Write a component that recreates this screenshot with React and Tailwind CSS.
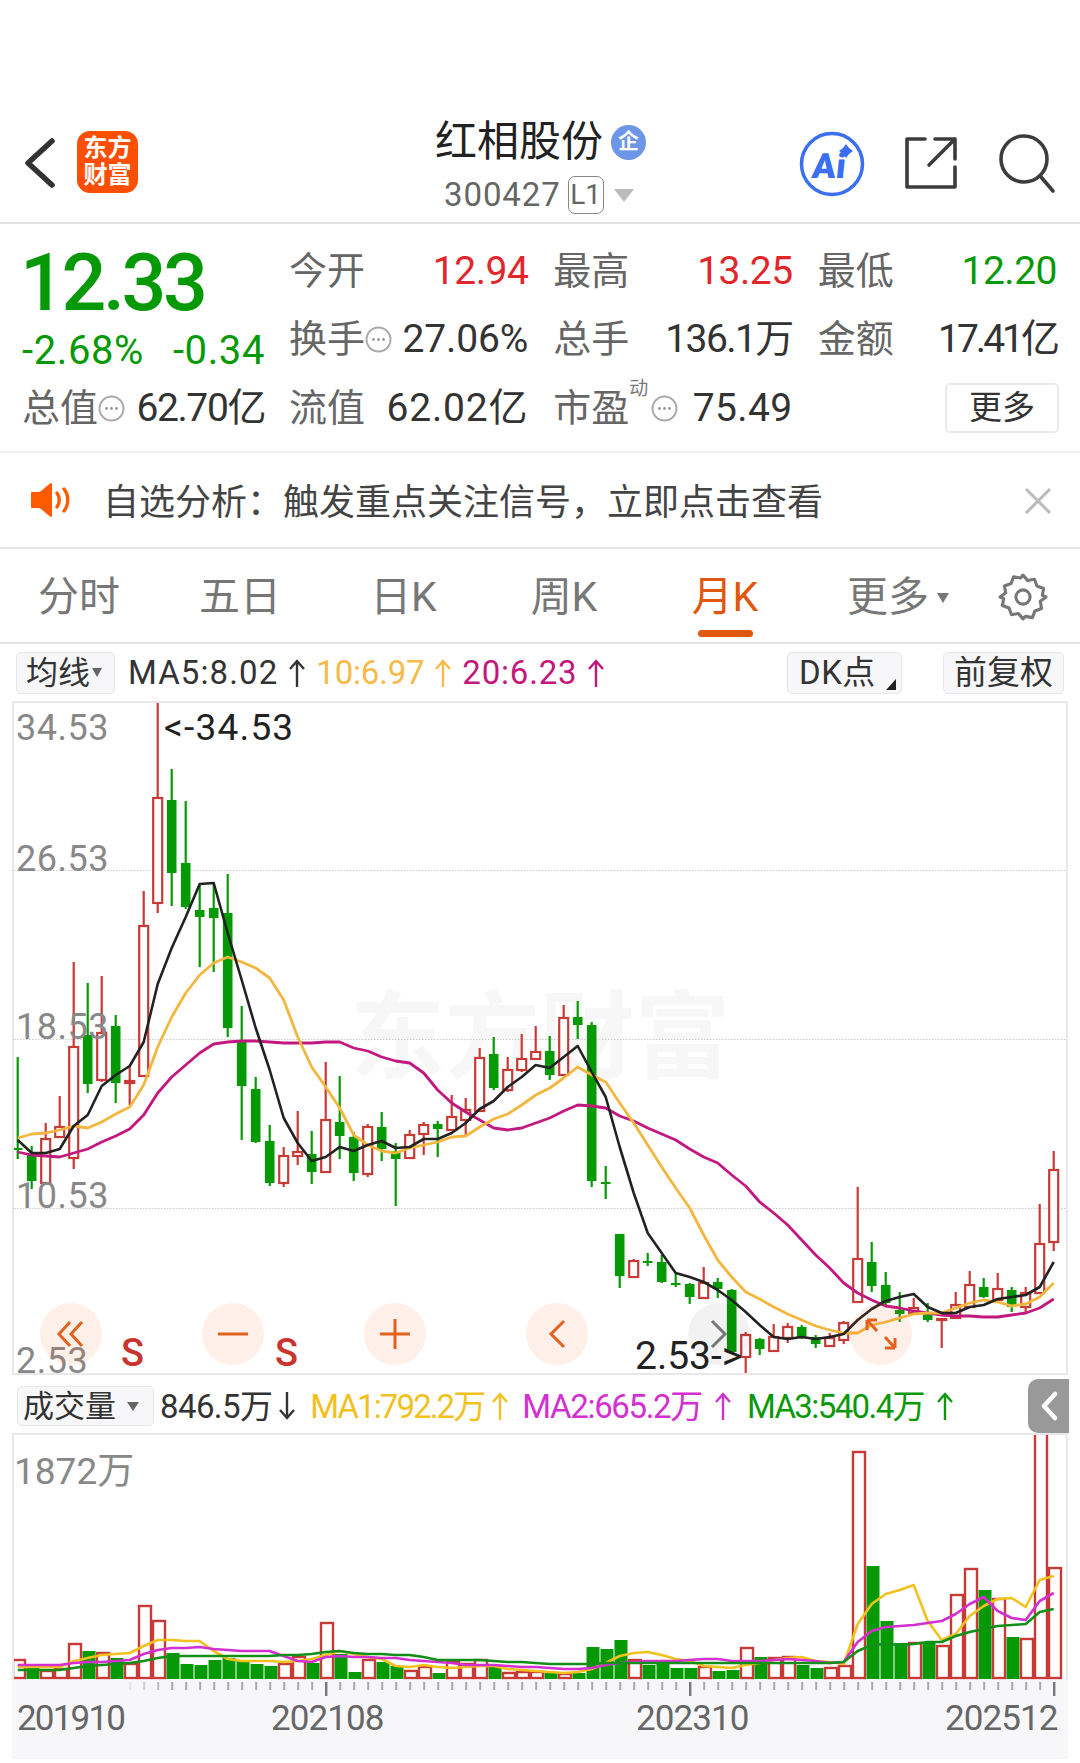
const red = "#c73a35"
const green = "#059a05"

// [hi, top, bottom, lo, colour] in page pixels, one per month
const candles = [
  [1057,1148,1150,1159,"g"],[1146,1155,1181,1189,"g"],[1123,1139,1183,1183,"r"],[1096,1127,1137,1138,"r"],[962,1047,1158,1169,"r"],
  [983,1035,1084,1093,"g"],[976,1033,1080,1082,"r"],[1015,1026,1083,1103,"g"],[1065,1081,1083,1105,"r"],[891,926,1076,1076,"r"],
  [702,798,903,913,"r"],[769,800,873,906,"g"],[801,863,907,909,"g"],[885,910,917,967,"g"],[882,908,918,972,"g"],
  [874,913,1028,1037,"g"],[1006,1042,1086,1140,"g"],[1077,1089,1142,1143,"g"],[1125,1141,1183,1186,"g"],[1147,1156,1183,1187,"r"],
  [1111,1152,1156,1165,"r"],[1131,1154,1172,1184,"g"],[1062,1120,1172,1173,"r"],[1076,1122,1136,1159,"g"],[1132,1137,1173,1181,"g"],
  [1124,1127,1174,1177,"r"],[1112,1127,1149,1161,"g"],[1143,1151,1159,1206,"g"],[1130,1135,1158,1159,"r"],[1122,1125,1134,1155,"r"],
  [1121,1124,1129,1157,"g"],[1095,1117,1130,1131,"r"],[1098,1110,1120,1135,"r"],[1048,1058,1111,1111,"r"],[1037,1054,1088,1090,"g"],
  [1057,1070,1090,1092,"r"],[1034,1059,1070,1072,"r"],[1026,1052,1059,1059,"r"],[1036,1051,1075,1080,"g"],[1005,1018,1075,1076,"r"],
  [1001,1017,1025,1039,"g"],[1022,1025,1181,1187,"g"],[1166,1182,1183,1199,"g"],[1234,1234,1276,1288,"g"],[1259,1261,1277,1278,"r"],
  [1253,1261,1263,1266,"g"],[1255,1262,1282,1283,"g"],[1272,1283,1284,1287,"g"],[1283,1284,1297,1304,"g"],[1267,1283,1298,1298,"r"],
  [1278,1282,1289,1298,"g"],[1289,1290,1352,1353,"g"],[1332,1335,1357,1375,"r"],[1338,1339,1349,1355,"g"],[1324,1337,1351,1351,"r"],
  [1323,1327,1338,1343,"r"],[1325,1327,1337,1339,"g"],[1335,1337,1344,1348,"g"],[1333,1338,1346,1347,"r"],[1321,1323,1340,1344,"r"],
  [1187,1259,1302,1302,"r"],[1242,1262,1286,1292,"g"],[1272,1285,1303,1305,"g"],[1292,1310,1314,1322,"g"],[1298,1308,1313,1315,"r"],
  [1303,1313,1320,1322,"g"],[1318,1319,1320,1348,"r"],[1292,1305,1318,1319,"r"],[1271,1285,1307,1308,"r"],[1278,1287,1297,1298,"g"],
  [1273,1289,1300,1301,"r"],[1287,1290,1307,1312,"g"],[1287,1293,1307,1312,"r"],[1204,1244,1293,1293,"r"],[1151,1170,1242,1251,"r"],
]

const ma5 = [1140,1153,1153,1149,1126,1115,1086,1075,1066,1042,984,948,917,884,883,933,980,1028,1070,1118,1143,1161,1157,1147,1151,1145,1141,1148,1147,1139,1139,1133,1123,1109,1101,1087,1077,1065,1068,1057,1046,1072,1097,1147,1193,1233,1253,1273,1277,1282,1290,1300,1312,1325,1337,1339,1337,1339,1337,1334,1320,1309,1301,1297,1294,1307,1313,1313,1307,1305,1299,1297,1295,1287,1262]
const ma10 = [1138,1134,1133,1130,1126,1128,1122,1114,1107,1085,1047,1017,993,975,963,957,962,968,978,1000,1037,1067,1087,1108,1135,1145,1151,1153,1148,1145,1142,1137,1136,1127,1119,1114,1105,1095,1088,1078,1067,1075,1082,1103,1123,1145,1167,1188,1208,1235,1260,1277,1292,1299,1307,1314,1320,1326,1330,1333,1333,1325,1322,1318,1314,1313,1313,1308,1303,1300,1302,1306,1304,1297,1283]
const ma20 = [1152,1155,1156,1157,1153,1149,1142,1136,1129,1115,1093,1077,1065,1053,1044,1042,1041,1041,1042,1043,1043,1043,1042,1042,1048,1051,1057,1061,1063,1073,1090,1103,1112,1120,1128,1130,1128,1123,1118,1111,1105,1106,1108,1116,1121,1128,1134,1140,1149,1157,1163,1175,1186,1202,1213,1225,1240,1255,1268,1283,1293,1300,1306,1308,1311,1313,1315,1316,1316,1317,1317,1315,1313,1308,1299]

// volume bar tops, baseline is 1680
const vols = [
  [1661,"r"],[1668,"g"],[1672,"r"],[1670,"r"],[1645,"r"],[1652,"g"],[1654,"r"],[1659,"g"],[1665,"r"],[1607,"r"],
  [1622,"r"],[1654,"g"],[1665,"g"],[1666,"g"],[1661,"g"],[1659,"g"],[1662,"g"],[1665,"g"],[1667,"g"],[1665,"r"],
  [1658,"r"],[1664,"g"],[1624,"r"],[1655,"g"],[1673,"g"],[1661,"r"],[1663,"g"],[1667,"g"],[1672,"r"],[1668,"r"],
  [1674,"g"],[1663,"r"],[1665,"r"],[1661,"r"],[1667,"g"],[1674,"r"],[1673,"r"],[1673,"r"],[1674,"g"],[1675,"r"],
  [1674,"g"],[1648,"g"],[1650,"g"],[1641,"g"],[1661,"r"],[1666,"g"],[1665,"g"],[1669,"g"],[1669,"g"],[1668,"r"],
  [1672,"g"],[1671,"g"],[1649,"r"],[1658,"g"],[1659,"r"],[1658,"r"],[1666,"g"],[1669,"g"],[1669,"r"],[1667,"r"],
  [1453,"r"],[1567,"g"],[1622,"g"],[1644,"g"],[1644,"r"],[1643,"g"],[1647,"r"],[1596,"r"],[1570,"r"],[1591,"g"],
  [1600,"r"],[1638,"g"],[1640,"r"],[1433,"r"],[1569,"r"],
]

const vma1 = [1668,1668,1668,1668,1662,1659,1656,1655,1654,1647,1641,1641,1642,1642,1652,1660,1662,1662,1662,1663,1662,1660,1656,1652,1655,1658,1660,1667,1668,1666,1668,1669,1668,1667,1667,1670,1671,1672,1673,1674,1673,1670,1664,1657,1654,1653,1656,1660,1662,1667,1668,1669,1666,1664,1661,1659,1658,1662,1663,1665,1625,1605,1595,1591,1586,1622,1641,1635,1617,1607,1600,1599,1608,1581,1577]
const vma2 = [1666,1666,1666,1666,1664,1663,1663,1662,1661,1655,1651,1649,1649,1648,1650,1651,1652,1652,1652,1657,1662,1663,1658,1657,1658,1658,1659,1659,1661,1662,1663,1664,1666,1666,1666,1667,1668,1668,1669,1670,1670,1669,1666,1664,1663,1662,1662,1662,1661,1660,1660,1662,1662,1662,1661,1660,1661,1662,1664,1663,1643,1632,1628,1627,1626,1624,1622,1615,1605,1598,1612,1619,1621,1602,1594]
const vma3 = [1671,1671,1671,1671,1669,1667,1666,1665,1664,1662,1659,1657,1657,1657,1657,1657,1657,1657,1657,1656,1656,1655,1653,1652,1654,1655,1655,1656,1656,1658,1661,1661,1661,1661,1662,1663,1663,1664,1665,1665,1665,1665,1664,1664,1664,1664,1664,1664,1664,1664,1664,1664,1664,1664,1664,1664,1664,1664,1664,1663,1652,1646,1645,1646,1645,1643,1643,1637,1633,1630,1627,1626,1625,1613,1610]

const xAt = (i) => 17.7 + 14 * i
const toPoints = (ys) => ys.map((y, i) => `${xAt(i)},${y}`).join(" ")

function HelpDot() {
  return (
    <svg width="27" height="27" viewBox="0 0 27 27" className="shrink-0">
      <circle cx="13.5" cy="13.5" r="12" fill="none" stroke="#aaa" strokeWidth="2" />
      <circle cx="8.5" cy="13.5" r="1.4" fill="#999" />
      <circle cx="13.5" cy="13.5" r="1.4" fill="#999" />
      <circle cx="18.5" cy="13.5" r="1.4" fill="#999" />
    </svg>
  )
}

function UpArrow({ color, down, className = "mx-[6px]" }) {
  return (
    <svg width="18" height="30" viewBox="0 0 18 30" className={`${className} shrink-0 ${down ? "rotate-180" : ""}`}>
      <path d="M9 29V3M2 11l7-8 7 8" fill="none" stroke={color} strokeWidth="2.4" />
    </svg>
  )
}

function Stat({ label, value, color, help, tracking = "tracking-[-0.5px]" }) {
  return (
    <div className="flex items-center justify-between">
      <span className="flex items-center text-[38px] text-[#666]">
        {label}
        {help}
      </span>
      <span className={`text-[39px] ${tracking} ${color}`}>{value}</span>
    </div>
  )
}

function Header() {
  return (
    <header className="mt-[115px] flex h-[109px] items-start border-b-2 border-[#e3e3e3] pt-[16px]">
      <svg width="34" height="52" viewBox="0 0 34 52" className="ml-[23px] mt-[6px]">
        <path d="M29 4L5 26l24 22" fill="none" stroke="#333" strokeWidth="5.5" strokeLinecap="round" strokeLinejoin="round" />
      </svg>
      <div className="ml-[20px] flex h-[62px] w-[61px] flex-col items-center justify-center rounded-[13px] bg-[#fc4f05] text-[24px] font-bold leading-[27px] text-white">
        <span>东方</span>
        <span>财富</span>
      </div>
      <div className="ml-[297px] -mt-[12px] flex w-[214px] flex-col">
        <div className="flex h-[46px] items-center">
          <span className="text-[42px] leading-[46px] text-[#222]">红相股份</span>
          <span className="ml-[8px] flex h-[35px] w-[35px] items-center justify-center rounded-full bg-[#6d96e6] text-[21px] font-bold text-white">企</span>
        </div>
        <div className="mt-[11px] flex items-center pl-[9px]">
          <span className="text-[33px] leading-[38px] tracking-[0.9px] text-[#666]">300427</span>
          <span className="ml-[7px] flex h-[38px] w-[36px] items-center justify-center rounded-[7px] border border-[#888] text-[28px] leading-none text-[#666]">L1</span>
          <span className="ml-[10px] h-0 w-0 border-x-[10px] border-t-[13px] border-x-transparent border-t-[#bbb]" />
        </div>
      </div>
      <svg width="66" height="66" viewBox="0 0 66 66" className="ml-[150px]">
        <circle cx="33" cy="33" r="30.5" fill="none" stroke="#3a6ff0" strokeWidth="3.5" />
        <text x="13" y="47" fontSize="35" fontWeight="900" fontFamily="Roboto" fill="#3a6ff0" transform="skewX(-6) translate(4 0)">Ai</text>
        <path d="M47 13l3 4 4 3-4 3-3 4-3-4-4-3 4-3z" fill="#3a6ff0" />
      </svg>
      <svg width="54" height="54" viewBox="0 0 54 54" className="ml-[39px] mt-[5px]">
        <path d="M21 3H3v48h48V31M31 3h20v20M51 3L25 29" fill="none" stroke="#3c3c3c" strokeWidth="3.6" strokeLinecap="round" strokeLinejoin="round" />
      </svg>
      <svg width="58" height="62" viewBox="0 0 58 62" className="ml-[41px] mt-[3px]">
        <circle cx="25" cy="25" r="23" fill="none" stroke="#3c3c3c" strokeWidth="3.6" />
        <path d="M42 43l12 14" fill="none" stroke="#3c3c3c" strokeWidth="3.6" strokeLinecap="round" />
      </svg>
    </header>
  )
}

function Quote() {
  return (
    <section className="flex h-[229px] border-b-2 border-[#eee] pl-[22px] pr-[23px] pt-[22px]">
      <div className="w-[243px] shrink-0">
        <div className="-ml-[2px] h-[74px] font-medium text-[#059a05]">
          <span className="text-[79px] leading-[74px] tracking-[-3.4px]">12.33</span>
        </div>
        <div className="mt-[11px] flex h-[40px] items-center justify-between text-[40px] tracking-[0.6px] text-[#059a05]">
          <span>-2.68%</span>
          <span>-0.34</span>
        </div>
        <div className="mt-[12px] flex h-[50px] items-center justify-between">
          <span className="flex items-center text-[38px] text-[#666]">总值<HelpDot /></span>
          <span className="text-[39px] tracking-[-1.4px] text-[#333]">62.70亿</span>
        </div>
      </div>
      <div className="ml-[24px] grid flex-1 grid-cols-3 gap-x-[25px] gap-y-[18.5px] [grid-auto-rows:50px]">
        <Stat label="今开" value="12.94" color="text-[#e2262c]" />
        <Stat label="最高" value="13.25" color="text-[#e2262c]" />
        <Stat label="最低" value="12.20" color="text-[#059a05]" />
        <Stat label="换手" value="27.06%" color="text-[#333]" help={<HelpDot />} tracking="tracking-[-0.1px]" />
        <Stat label="总手" value="136.1万" color="text-[#333]" tracking="tracking-[-1.6px]" />
        <Stat label="金额" value="17.41亿" color="text-[#333]" tracking="tracking-[-3px]" />
        <Stat label="流值" value="62.02亿" color="text-[#333]" tracking="tracking-[0.8px]" />
        <div className="flex items-center justify-between">
          <span className="relative flex items-center text-[38px] text-[#666]">
            市盈
            <span className="absolute left-[76px] top-[-5px] text-[19px] text-[#777]">动</span>
            <span className="ml-[22px]"><HelpDot /></span>
          </span>
          <span className="text-[39px] tracking-[0.4px] text-[#333]">75.49</span>
        </div>
        <div className="flex items-center justify-end">
          <button className="-mr-[2px] flex h-[50px] w-[114px] items-center justify-center rounded-[5px] border-2 border-[#eaeaea] text-[33px] text-[#333]">更多</button>
        </div>
      </div>
    </section>
  )
}

function Notice() {
  return (
    <section className="flex h-[96px] items-center border-b-2 border-[#e3e3e3] pl-[31px] pr-[28px]">
      <svg width="42" height="34" viewBox="0 0 42 34" className="shrink-0">
        <path d="M1 10h8L20 1v32L9 24H1z" fill="#ff5a00" stroke="#ff5a00" strokeLinejoin="round" strokeWidth="2" />
        <path d="M26 10c3 4 3 10 0 14M33 6c5 6 5 16 0 22" fill="none" stroke="#ff5a00" strokeWidth="3.4" strokeLinecap="round" />
      </svg>
      <span className="ml-[30px] mt-[6px] flex-1 text-[36px] leading-none text-[#444]">自选分析：触发重点关注信号，立即点击查看</span>
      <svg width="28" height="28" viewBox="0 0 28 28" className="mt-[1px]">
        <path d="M2 2l24 24M26 2L2 26" fill="none" stroke="#bbb" strokeWidth="3" />
      </svg>
    </section>
  )
}

function Tabs() {
  return (
    <nav className="flex h-[95px] items-start border-b-2 border-[#e3e3e3] text-[41px] text-[#777]">
      <span className="mt-[26px] w-[158px] text-center leading-[44px]">分时</span>
      <span className="mt-[26px] w-[164px] text-center leading-[44px]">五日</span>
      <span className="mt-[26px] w-[163px] text-center leading-[44px]">日K</span>
      <span className="mt-[26px] w-[158px] text-center leading-[44px]">周K</span>
      <span className="mt-[26px] flex w-[164px] flex-col items-center leading-[44px] text-[#e0570e]">
        月K
        <span className="mt-[11px] h-[7px] w-[55px] rounded-full bg-[#e0570e]" />
      </span>
      <span className="mt-[26px] flex w-[182px] items-center justify-center leading-[44px]">
        更多
        <span className="ml-[8px] mt-[2px] h-0 w-0 border-x-[6px] border-t-[10px] border-x-transparent border-t-[#777]" />
      </span>
      <svg width="50" height="50" viewBox="0 0 24 24" className="ml-[9px] mt-[23px]" fill="none" stroke="#777" strokeWidth="1.5" strokeLinejoin="round">
        <path d="M12 1.5l2.2 2.6 3.3-.6 1.2 3.2 3.2 1.2-.6 3.3L23 12l-2.7 2 .6 3.5-3.2 1.2-1.2 3.2-3.3-.6L12 22.5l-2.2-2.6-3.3.6-1.2-3.2-3.2-1.2.6-3.3L1 12l2.7-2-.6-3.3 3.2-1.2 1.2-3.2 3.3.6z" />
        <circle cx="12" cy="12" r="3.4" />
      </svg>
    </nav>
  )
}

function MaRow() {
  return (
    <div className="flex h-[57px] items-center pl-[16px] pr-[16px] text-[33px] leading-none">
      <span className="flex h-[42px] w-[99px] items-center rounded-[5px] border border-[#e6e6ea] bg-[#f7f7f9] pl-[9px] text-[32px] text-[#333]">
        均线
        <span className="ml-[2px] h-0 w-0 border-x-[5px] border-t-[9px] border-x-transparent border-t-[#666]" />
      </span>
      <span className="ml-[13px] tracking-[1.1px] text-[#333]">MA5:8.02</span>
      <UpArrow color="#333" className="mx-[10px]" />
      <span className="tracking-[-0.2px] text-[#f5bb4a]">10:6.97</span>
      <UpArrow color="#f5bb4a" className="mx-[10px]" />
      <span className="tracking-[0.8px] text-[#c2187e]">20:6.23</span>
      <UpArrow color="#c2187e" className="mx-[10px]" />
      <span className="relative ml-auto flex h-[42px] w-[115px] items-center rounded-[5px] border border-[#e6e6ea] bg-[#f7f7f9] pl-[11px] tracking-[0.5px] text-[#333]">
        DK点
        <svg width="10" height="11" viewBox="0 0 10 11" className="absolute bottom-[3px] right-[5px]"><path d="M10 0v11H0z" fill="#222" /></svg>
      </span>
      <span className="ml-[41px] flex h-[42px] w-[121px] items-center justify-center rounded-[5px] border border-[#e6e6ea] bg-[#f7f7f9] text-[33px] text-[#333]">前复权</span>
    </div>
  )
}

function PriceSvg() {
  return (
    <svg width="1052" height="670" viewBox="14 703 1052 670" className="absolute left-0 top-0">
      {[870.5, 1039.5, 1208.5].map((y) => (
        <line key={y} x1="14" x2="1066" y1={y} y2={y} stroke="#ccc" strokeWidth="1" strokeDasharray="1.5 1.5" />
      ))}
      {candles.map(([hi, top, bot, lo, c], i) => {
        const x = xAt(i)
        const col = c === "r" ? red : green
        return (
          <g key={i}>
            <line x1={x} x2={x} y1={hi} y2={top} stroke={col} strokeWidth="2.2" />
            <line x1={x} x2={x} y1={bot} y2={lo} stroke={col} strokeWidth="2.2" />
            {c === "r" ? (
              <rect x={x - 4.5} y={top} width="9" height={Math.max(bot - top, 1)} fill="#fff" stroke={col} strokeWidth="2.2" />
            ) : (
              <rect x={x - 4.8} y={top} width="9.6" height={Math.max(bot - top, 2)} fill={col} />
            )}
          </g>
        )
      })}
      <polyline points={toPoints(ma20)} fill="none" stroke="#c2187f" strokeWidth="2.8" strokeLinejoin="round" />
      <polyline points={toPoints(ma10)} fill="none" stroke="#f3b73f" strokeWidth="2.8" strokeLinejoin="round" />
      <polyline points={toPoints(ma5)} fill="none" stroke="#222" strokeWidth="2.6" strokeLinejoin="round" />
    </svg>
  )
}

function PriceChart() {
  return (
    <div className="relative mx-[12px] h-[674px] border-2 border-[#e8e8e8]">
      <span className="absolute left-[336px] top-[288px] whitespace-nowrap text-[95px] font-bold leading-none text-[#f7f7f7]">东方财富</span>
      <PriceSvg />
      <span className="absolute left-[2px] top-[4px] text-[36px] leading-[42px] tracking-[0.5px] text-[#888]">34.53</span>
      <span className="absolute left-[2px] top-[135px] text-[36px] leading-[42px] tracking-[0.5px] text-[#888]">26.53</span>
      <span className="absolute left-[2px] top-[303px] text-[36px] leading-[42px] tracking-[0.5px] text-[#888]">18.53</span>
      <span className="absolute left-[2px] top-[472px] text-[36px] leading-[42px] tracking-[0.5px] text-[#888]">10.53</span>
      <span className="absolute left-[2px] top-[643px] text-[36px] leading-[30px] tracking-[0.5px] text-[#888]">2.53</span>
      <span className="absolute left-[150px] top-[4px] text-[37px] leading-[42px] tracking-[1.2px] text-[#222]">&lt;-34.53</span>
      <span className="absolute left-[621px] top-[636px] text-[39px] leading-[34px] text-[#222]">2.53-&gt;</span>
      <span className="absolute left-[107px] top-[633px] text-[38px] font-medium leading-[34px] text-[#c9342f]">S</span>
      <span className="absolute left-[261px] top-[633px] text-[38px] font-medium leading-[34px] text-[#c9342f]">S</span>
      <div className="absolute left-[26px] top-[600px] flex gap-[100px]">
        <span className="flex h-[62px] w-[62px] items-center justify-center rounded-full bg-[#f4631a]/10">
          <svg width="30" height="30" viewBox="0 0 30 30"><path d="M14 3L3 15l11 12M26 3L15 15l11 12" fill="none" stroke="#e0621e" strokeWidth="3" /></svg>
        </span>
        <span className="flex h-[62px] w-[62px] items-center justify-center rounded-full bg-[#f4631a]/10">
          <svg width="32" height="6" viewBox="0 0 32 6"><path d="M1 3h30" stroke="#e0621e" strokeWidth="3" /></svg>
        </span>
        <span className="flex h-[62px] w-[62px] items-center justify-center rounded-full bg-[#f4631a]/10">
          <svg width="32" height="32" viewBox="0 0 32 32"><path d="M1 16h30M16 1v30" stroke="#e0621e" strokeWidth="3" /></svg>
        </span>
        <span className="flex h-[62px] w-[62px] items-center justify-center rounded-full bg-[#f4631a]/10">
          <svg width="18" height="30" viewBox="0 0 18 30"><path d="M16 2L3 15l13 13" fill="none" stroke="#e0621e" strokeWidth="3" /></svg>
        </span>
        <span className="flex h-[62px] w-[62px] items-center justify-center rounded-full bg-black/5">
          <svg width="18" height="30" viewBox="0 0 18 30"><path d="M2 2l13 13L2 28" fill="none" stroke="#777" strokeWidth="3" /></svg>
        </span>
        <span className="flex h-[62px] w-[62px] items-center justify-center rounded-full bg-[#f4631a]/10">
          <svg width="32" height="32" viewBox="0 0 32 32"><path d="M2 2l10 11M2 2h10M2 2v10M30 30L20 19M30 30H20M30 30V20" fill="none" stroke="#e0621e" strokeWidth="3" /></svg>
        </span>
      </div>
    </div>
  )
}

function VolumeRow() {
  return (
    <div className="flex h-[58px] items-center pl-[17px] pt-[4px] text-[33px] leading-none">
      <span className="flex h-[40px] w-[137px] items-center rounded-[5px] border border-[#e6e6ea] bg-[#f7f7f9] pl-[5px] text-[31px] text-[#333]">
        成交量
        <span className="ml-[11px] h-0 w-0 border-x-[6px] border-t-[9px] border-x-transparent border-t-[#666]" />
      </span>
      <span className="ml-[6px] tracking-[-0.6px] text-[#333]">846.5万</span>
      <UpArrow color="#333" down />
      <span className="ml-[8px] tracking-[-1.9px] text-[#f2c11e]">MA1:792.2万</span>
      <UpArrow color="#f2c11e" className="mx-[7px]" />
      <span className="ml-[6px] tracking-[-1.35px] text-[#d42fd0]">MA2:665.2万</span>
      <UpArrow color="#d42fd0" className="mx-[12px]" />
      <span className="ml-[3px] tracking-[-1.6px] text-[#0a990a]">MA3:540.4万</span>
      <UpArrow color="#0a990a" className="mx-[12px]" />
      <span className="ml-auto mr-[11px] flex h-[54px] w-[41px] items-center justify-center self-start rounded-l-[10px] bg-[#999]">
        <svg width="18" height="30" viewBox="0 0 18 30"><path d="M15 3L4 15l11 12" fill="none" stroke="#fff" strokeWidth="4.5" strokeLinecap="round" strokeLinejoin="round" /></svg>
      </span>
    </div>
  )
}

function VolumeChart() {
  return (
    <div className="relative mx-[12px] h-[247px] overflow-hidden border-x-2 border-t-2 border-[#e8e8e8]">
      <svg width="1052" height="245" viewBox="14 1436 1052 245" className="absolute left-0 top-0">
        {vols.map(([top, c], i) => {
          const x = xAt(i) + 1.3
          return c === "r" ? (
            <rect key={i} x={x - 6} y={top} width="12" height={1679 - top} fill="#fff" stroke={red} strokeWidth="2.4" />
          ) : (
            <rect key={i} x={x - 6.5} y={top} width="13" height={1680 - top} fill={green} />
          )
        })}
        <polyline points={toPoints(vma1)} fill="none" stroke="#f2c11e" strokeWidth="2.6" strokeLinejoin="round" />
        <polyline points={toPoints(vma2)} fill="none" stroke="#d42fd0" strokeWidth="2.6" strokeLinejoin="round" />
        <polyline points={toPoints(vma3)} fill="none" stroke="#128f18" strokeWidth="2.6" strokeLinejoin="round" />
      </svg>
      <span className="absolute left-0 top-[16px] text-[37px] leading-[42px] text-[#888]">1872万</span>
    </div>
  )
}

function DateAxis() {
  return (
    <div className="relative mx-[12px] h-[79px] bg-[#f7f7f9] text-[35px] leading-none tracking-[-0.9px] text-[#666]">
      <svg width="1056" height="20" viewBox="12 1681 1056 20" className="absolute left-0 top-0">
        {candles.map((_, i) => {
          if (i < 8) return null
          const major = i === 22 || i === 48 || i === 74
          const x = xAt(i) + 0.5
          return (
            <line
              key={i}
              x1={x}
              x2={x}
              y1="1683"
              y2={major ? 1697 : 1691}
              stroke={major ? "#777" : "#aaa"}
              strokeWidth={major ? 2.4 : 2}
              opacity={i === 8 ? 0.25 : i === 9 ? 0.5 : i === 10 ? 0.8 : 1}
            />
          )
        })}
      </svg>
      <span className="absolute left-[5px] top-[21px] tracking-[-1.8px]">201910</span>
      <span className="absolute left-[259px] top-[21px]">202108</span>
      <span className="absolute left-[624px] top-[21px]">202310</span>
      <span className="absolute left-[933px] top-[21px]">202512</span>
    </div>
  )
}

export default function App() {
  return (
    <div className="flex h-[1763px] w-[1080px] flex-col overflow-hidden bg-white font-['Roboto','Noto_Sans_CJK_SC',sans-serif]">
      <Header />
      <Quote />
      <Notice />
      <Tabs />
      <MaRow />
      <PriceChart />
      <VolumeRow />
      <VolumeChart />
      <DateAxis />
    </div>
  )
}
